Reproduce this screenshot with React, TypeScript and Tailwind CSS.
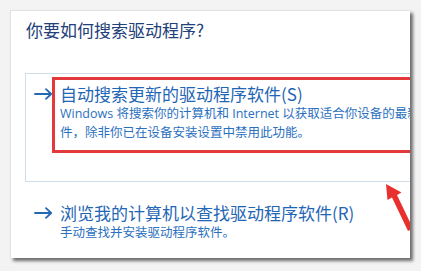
const font = { fontFamily: '"Noto Sans CJK SC", "Noto Sans", sans-serif' };
const descFont = { fontFamily: '"Open Sans", "Noto Sans CJK SC", sans-serif' };

const Arrow = () => (
  <svg width="19" height="12" viewBox="0 0 19 12" className="shrink-0">
    <path d="M1 6h16M12 1.2L17.2 6 12 10.8" fill="none" stroke="#2468b4" strokeWidth="1.8" strokeLinecap="round" strokeLinejoin="round" />
  </svg>
);

const App = () => {
  return (
    <div className="w-[421px] h-[271px] bg-[#f3f3f3] pt-[10px] pl-[10px] overflow-hidden" style={font}>
      {/* dialog */}
      <div className="relative w-[400px] h-[248px] bg-white border-l border-t border-[#e2e2e2] shadow-[3px_3px_3px_rgba(0,0,0,0.55)] overflow-hidden">
        <h1 className="pl-[15px] pt-[7px] text-[17px] leading-[24px] text-[#22407a] whitespace-nowrap">你要如何搜索驱动程序?</h1>

        {/* option 1 */}
        <div className="relative mt-[31px] ml-[14px] w-[420px] border border-[#cfdde9] pt-[9px] pb-[39px]">
          <div className="flex">
            <div className="w-[34px] shrink-0 pl-[8px] pt-[5px]">
              <Arrow />
            </div>
            <div className="whitespace-nowrap">
              <p className="text-[17px] leading-[22px] text-[#1f66b5]">自动搜索更新的驱动程序软件(S)</p>
              <div className="text-[12.5px] leading-[18.5px] text-[#2a70bf]" style={descFont}>
                <p>Windows 将搜索你的计算机和 Internet 以获取适合你设备的最新驱动程序软</p>
                <p>件，除非你已在设备安装设置中禁用此功能。</p>
              </div>
            </div>
          </div>
          {/* red highlight */}
          <div className="absolute left-[26px] top-[3px] w-[400px] h-[76px] border-[3px] border-[#e23a3c]" />
        </div>

        {/* option 2 */}
        <div className="flex ml-[15px] mt-[20px]">
          <div className="w-[34px] shrink-0 pl-[8px] pt-[5px]">
            <Arrow />
          </div>
          <div className="whitespace-nowrap">
            <p className="text-[17px] leading-[22px] text-[#1f66b5]">浏览我的计算机以查找驱动程序软件(R)</p>
            <p className="text-[12.5px] leading-[18.5px] text-[#2a70bf]" style={descFont}>手动查找并安装驱动程序软件。</p>
          </div>
        </div>

        {/* annotation arrow */}
        <svg className="absolute left-[360px] top-[160px]" width="60" height="90" viewBox="0 0 60 90">
          <path d="M15 13 L16.5 29 L21 26.5 L37 60 L42 57.5 L26 24 L30.5 21.5 Z" fill="#e8302f" />
        </svg>
      </div>
    </div>
  );
};

export default App;
